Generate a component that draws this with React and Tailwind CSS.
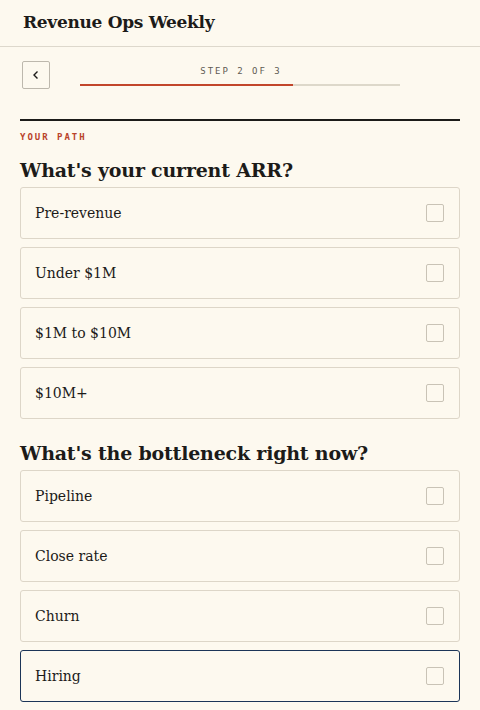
import React, { useState } from 'react';

const serif = "font-['DejaVu_Serif','Liberation_Serif',serif]";
const mono = "font-['DejaVu_Sans_Mono','Liberation_Mono',monospace]";

const questions = [
  {
    id: 'arr',
    title: "What's your current ARR?",
    options: ['Pre-revenue', 'Under $1M', '$1M to $10M', '$10M+'],
  },
  {
    id: 'bottleneck',
    title: "What's the bottleneck right now?",
    options: ['Pipeline', 'Close rate', 'Churn', 'Hiring'],
  },
];

const Option = ({ label, focused, checked, onClick }) => (
  <button
    onClick={onClick}
    className={`w-full h-[52px] flex items-center justify-between pl-[14px] pr-[15px] rounded-[3px] border text-left ${
      focused ? 'border-[#1c3558]' : 'border-[#ddd6c8]'
    }`}
  >
    <span className={`${serif} text-[14px] text-[#1c1b19]`}>{label}</span>
    <span
      className={`w-[18px] h-[18px] rounded-[2px] border ${
        checked ? 'border-[#1c3558] bg-[#1c3558]' : 'border-[#c9c3b6]'
      }`}
    />
  </button>
);

export default function App() {
  const [answers, setAnswers] = useState({});
  const [focus] = useState('bottleneck-Hiring');

  return (
    <div className="min-h-[710px] bg-[#fdf9ef] text-[#1c1b19]">
      {/* Masthead */}
      <header className="h-[47px] flex items-center px-[23px] border-b border-[#ddd8cc]">
        <h1 className={`${serif} font-bold text-[17px] tracking-[-0.3px]`}>Revenue Ops Weekly</h1>
      </header>

      <main className="px-[20px]">
        {/* Stepper */}
        <div className="flex items-start pt-[14px]">
          <button className="w-[28px] h-[28px] ml-[2px] flex items-center justify-center rounded-[2px] border border-[#bdb8ad]">
            <svg width="10" height="10" viewBox="0 0 10 10" fill="none" stroke="#1c1b19" strokeWidth="1.4">
              <path d="M6.5 1.5 3 5l3.5 3.5" />
            </svg>
          </button>
          <div className="ml-[30px] mt-[5px] w-[320px] flex flex-col items-center">
            <span className={`${mono} text-[9px] tracking-[0.22em] text-[#5f5b54] leading-[10px] pl-[2px]`}>STEP 2 OF 3</span>
            <div className="mt-[8px] w-full h-[2px] bg-[#ddd8ca]">
              <div className="h-full bg-[#c2462b]" style={{ width: `${(2 / 3) * 100}%` }} />
            </div>
          </div>
        </div>

        <div className="mt-[30px] border-t-2 border-[#1c1b19]" />

        <p className={`${mono} mt-[12px] text-[9px] font-bold tracking-[0.22em] text-[#b9432a] leading-none`}>YOUR PATH</p>

        {questions.map((q, qi) => (
          <section key={q.id} className={qi === 0 ? 'mt-[15px]' : 'mt-[21px]'}>
            <h2 className={`${serif} font-bold text-[19px] leading-[26px] tracking-[-0.2px] mb-[4px]`}>{q.title}</h2>
            <div className="flex flex-col gap-[8px]">
              {q.options.map((opt) => (
                <Option
                  key={opt}
                  label={opt}
                  focused={focus === `${q.id}-${opt}`}
                  checked={answers[q.id] === opt}
                  onClick={() => setAnswers({ ...answers, [q.id]: opt })}
                />
              ))}
            </div>
          </section>
        ))}
      </main>
    </div>
  );
}
